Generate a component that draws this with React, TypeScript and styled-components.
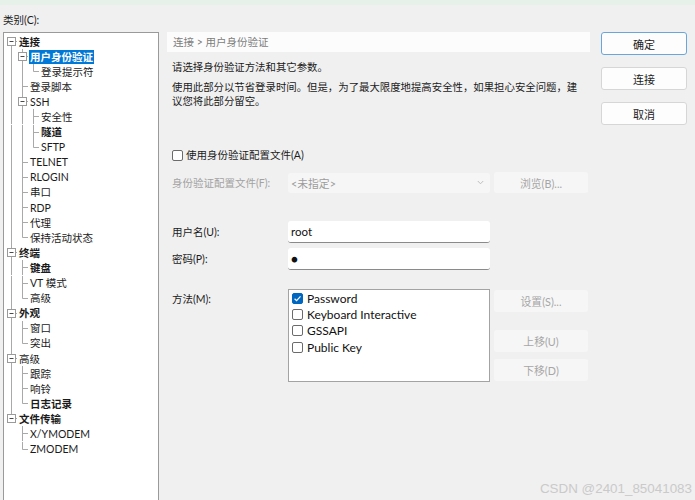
import React from 'react';
import styled, { createGlobalStyle } from 'styled-components';

const GlobalStyle = createGlobalStyle`
  html, body { margin: 0; padding: 0; background: #f0f0f0; }
  body { font-family: "Lato", "Noto Sans CJK SC", sans-serif; }
`;

const Window = styled.div`
  position: relative;
  width: 695px;
  height: 500px;
  overflow: hidden;
  background: #f0f0f0;
  color: #1b1b1b;
  font-family: "Lato", "Noto Sans CJK SC", sans-serif;
  font-size: 10.5px;
  display: flex;
  flex-direction: column;
`;

const TopStrip = styled.div`
  height: 5px;
  flex: none;
  background: #e5f1e9;
`;

const Body = styled.div`
  flex: 1;
  min-height: 0;
  display: flex;
  align-items: flex-start;
  padding-left: 3px;
`;

const LeftCol = styled.div`
  width: 156px;
  flex: none;
  display: flex;
  flex-direction: column;
`;

const CategoryLabel = styled.div`
  height: 27px;
  box-sizing: border-box;
  padding-top: 8px;
  line-height: 14px;
`;

const TreePanel = styled.div`
  height: 480px;
  box-sizing: border-box;
  background: #fff;
  border: 1px solid #9a9a9a;
  padding: 1px 0 0 2px;
`;

const TreeRow = styled.div`
  display: flex;
  align-items: center;
  height: 15.1px;
`;

const Cell = styled.svg`
  width: 11px;
  height: 100%;
  flex: none;
  overflow: visible;
`;

const NodeLabel = styled.span<{ $bold?: boolean; $selected?: boolean }>`
  margin-left: 1px;
  padding: 0 1px;
  height: 14px;
  line-height: 14px;
  white-space: nowrap;
  font-weight: ${(p) => (p.$bold ? 700 : 400)};
  background: ${(p) => (p.$selected ? '#0078d7' : 'transparent')};
  color: ${(p) => (p.$selected ? '#fff' : '#1b1b1b')};
`;

const MidCol = styled.div`
  width: 423px;
  flex: none;
  margin-left: 8px;
  margin-top: 27px;
  display: flex;
  flex-direction: column;
`;

const Breadcrumb = styled.div`
  height: 20px;
  line-height: 20px;
  background: #fcfcfc;
  color: #7c7c7c;
  padding-left: 6px;
`;

const Content = styled.div`
  padding-left: 5px;
  display: flex;
  flex-direction: column;
`;

const Para = styled.div<{ $mt: number }>`
  margin-top: ${(p) => p.$mt}px;
  line-height: 14px;
  font-size: 10.4px;
  white-space: nowrap;
`;

const CheckRow = styled.label`
  margin-top: 40px;
  height: 14px;
  display: flex;
  align-items: center;
  gap: 3px;
  line-height: 14px;
`;

const Box = styled.span<{ $checked?: boolean }>`
  width: 11px;
  height: 11px;
  flex: none;
  border-radius: 2px;
  box-sizing: border-box;
  border: 1px solid ${(p) => (p.$checked ? '#0067c0' : '#6b6b6b')};
  background: ${(p) => (p.$checked ? '#0067c0' : '#fff')};
  display: flex;
  align-items: center;
  justify-content: center;
`;

const FormRow = styled.div<{ $mt: number; $top?: boolean }>`
  margin-top: ${(p) => p.$mt}px;
  display: grid;
  grid-template-columns: 112px 202px 94px;
  column-gap: 4px;
  align-items: ${(p) => (p.$top ? 'start' : 'center')};
`;

const FieldLabel = styled.div<{ $disabled?: boolean; $pt?: number }>`
  line-height: 14px;
  white-space: nowrap;
  padding-top: ${(p) => p.$pt ?? 0}px;
  color: ${(p) => (p.$disabled ? '#a2a2a2' : '#1b1b1b')};
`;

const SelectBox = styled.div`
  height: 20px;
  box-sizing: border-box;
  background: #f6f6f6;
  border-radius: 3px;
  color: #9c9c9c;
  display: flex;
  align-items: center;
  justify-content: space-between;
  padding: 0 6px 0 3px;
  font-size: 10.8px;
`;

const TextInput = styled.div`
  height: 22px;
  box-sizing: border-box;
  background: #fff;
  border-radius: 3px;
  border-bottom: 1px solid #8a8a8a;
  padding-left: 3px;
  display: flex;
  align-items: center;
  font-size: 11.5px;
  color: #111;
`;

const GhostButton = styled.div<{ $h: number; $mt?: number }>`
  height: ${(p) => p.$h}px;
  margin-top: ${(p) => p.$mt ?? 0}px;
  box-sizing: border-box;
  background: #f6f6f6;
  border-radius: 3px;
  color: #a6a6a6;
  display: flex;
  align-items: center;
  justify-content: center;
  font-size: 10.8px;
`;

const ListBox = styled.div`
  height: 93px;
  box-sizing: border-box;
  background: #fff;
  border: 1px solid #a3a3a3;
  padding: 0 3px;
  display: flex;
  flex-direction: column;
`;

const ListItem = styled.div`
  height: 16.4px;
  display: flex;
  align-items: center;
  gap: 4px;
  font-size: 12px;
  color: #111;
`;

const ButtonStack = styled.div`
  display: flex;
  flex-direction: column;
`;

const RightCol = styled.div`
  width: 86px;
  flex: none;
  margin-left: 11px;
  margin-top: 27px;
  display: flex;
  flex-direction: column;
  gap: 12px;
`;

const DialogButton = styled.div<{ $default?: boolean }>`
  height: 23px;
  box-sizing: border-box;
  background: #fdfdfd;
  border: 1px solid ${(p) => (p.$default ? '#6aa6d9' : '#d6d6d6')};
  border-radius: 3px;
  display: flex;
  align-items: center;
  justify-content: center;
  font-size: 11px;
  color: #1b1b1b;
`;

const Watermark = styled.div`
  position: absolute;
  right: 3px;
  bottom: 4px;
  font-family: "Liberation Sans", sans-serif;
  font-size: 13.4px;
  color: #cacaca;
`;

type Node = { label: string; bold?: boolean; selected?: boolean; children?: Node[] };

const tree: Node[] = [
  {
    label: '连接',
    bold: true,
    children: [
      { label: '用户身份验证', bold: true, selected: true, children: [{ label: '登录提示符' }] },
      { label: '登录脚本' },
      { label: 'SSH', children: [{ label: '安全性' }, { label: '隧道', bold: true }, { label: 'SFTP' }] },
      { label: 'TELNET' },
      { label: 'RLOGIN' },
      { label: '串口' },
      { label: 'RDP' },
      { label: '代理' },
      { label: '保持活动状态' },
    ],
  },
  { label: '终端', bold: true, children: [{ label: '键盘', bold: true }, { label: 'VT 模式' }, { label: '高级' }] },
  { label: '外观', bold: true, children: [{ label: '窗口' }, { label: '突出' }] },
  { label: '高级', children: [{ label: '跟踪' }, { label: '响铃' }, { label: '日志记录', bold: true }] },
  { label: '文件传输', bold: true, children: [{ label: 'X/YMODEM' }, { label: 'ZMODEM' }] },
];

type Flat = { node: Node; guides: boolean[]; last: boolean; first: boolean };

function flatten(nodes: Node[], guides: boolean[], out: Flat[], root: boolean) {
  nodes.forEach((n, i) => {
    const last = i === nodes.length - 1;
    out.push({ node: n, guides, last, first: root && i === 0 });
    if (n.children) flatten(n.children, [...guides, !last], out, false);
  });
  return out;
}

const LINE = '#a9a9a9';

const Guide = ({ on }: { on: boolean }) => (
  <Cell>{on && <line x1="5.5" x2="5.5" y1="0" y2="100%" stroke={LINE} strokeWidth="1" />}</Cell>
);

const Connector = ({ first, last, expandable }: { first: boolean; last: boolean; expandable: boolean }) => (
  <Cell>
    <line x1="5.5" x2="5.5" y1={first ? '50%' : '0'} y2={last ? '50%' : '100%'} stroke={LINE} strokeWidth="1" />
    <line x1="5.5" x2="11" y1="7.5" y2="7.5" stroke={LINE} strokeWidth="1" />
    {expandable && (
      <>
        <rect x="1.5" y="3.5" width="8" height="8" fill="#fff" stroke="#9a9a9a" strokeWidth="1" />
        <line x1="3.5" x2="7.5" y1="7.5" y2="7.5" stroke="#4a4a4a" strokeWidth="1" />
      </>
    )}
  </Cell>
);

const Check = () => (
  <svg width="9" height="9" viewBox="0 0 9 9">
    <path d="M1.6 4.7 L3.6 6.6 L7.5 2.4" fill="none" stroke="#fff" strokeWidth="1.2" />
  </svg>
);

const methods = [
  { label: 'Password', checked: true },
  { label: 'Keyboard Interactive' },
  { label: 'GSSAPI' },
  { label: 'Public Key' },
];

export default function App() {
  const rows = flatten(tree, [], [], true);
  return (
    <>
      <GlobalStyle />
      <Window>
        <TopStrip />
        <Body>
          <LeftCol>
            <CategoryLabel>类别(C):</CategoryLabel>
            <TreePanel>
              {rows.map((r, i) => (
                <TreeRow key={i}>
                  {r.guides.map((g, j) => (
                    <Guide key={j} on={g} />
                  ))}
                  <Connector first={r.first} last={r.last} expandable={!!r.node.children} />
                  <NodeLabel $bold={r.node.bold} $selected={r.node.selected}>
                    {r.node.label}
                  </NodeLabel>
                </TreeRow>
              ))}
            </TreePanel>
          </LeftCol>

          <MidCol>
            <Breadcrumb>连接 &gt; 用户身份验证</Breadcrumb>
            <Content>
              <Para $mt={8}>请选择身份验证方法和其它参数。</Para>
              <Para $mt={6}>
                使用此部分以节省登录时间。但是，为了最大限度地提高安全性，如果担心安全问题，建
                <br />
                议您将此部分留空。
              </Para>
              <CheckRow>
                <Box />
                使用身份验证配置文件(A)
              </CheckRow>
              <FormRow $mt={10}>
                <FieldLabel $disabled>身份验证配置文件(F):</FieldLabel>
                <SelectBox>
                  <span>&lt;未指定&gt;</span>
                  <svg width="7" height="5" viewBox="0 0 7 5">
                    <path d="M0.8 1 L3.5 3.8 L6.2 1" fill="none" stroke="#b8b8b8" strokeWidth="0.9" />
                  </svg>
                </SelectBox>
                <GhostButton $h={21}>浏览(B)...</GhostButton>
              </FormRow>
              <FormRow $mt={28}>
                <FieldLabel>用户名(U):</FieldLabel>
                <TextInput>root</TextInput>
              </FormRow>
              <FormRow $mt={5}>
                <FieldLabel>密码(P):</FieldLabel>
                <TextInput>●</TextInput>
              </FormRow>
              <FormRow $mt={19} $top>
                <FieldLabel $pt={3}>方法(M):</FieldLabel>
                <ListBox>
                  {methods.map((m) => (
                    <ListItem key={m.label}>
                      <Box $checked={m.checked}>{m.checked && <Check />}</Box>
                      {m.label}
                    </ListItem>
                  ))}
                </ListBox>
                <ButtonStack>
                  <GhostButton $h={22} $mt={1}>设置(S)...</GhostButton>
                  <GhostButton $h={22} $mt={18}>上移(U)</GhostButton>
                  <GhostButton $h={22} $mt={7}>下移(D)</GhostButton>
                </ButtonStack>
              </FormRow>
            </Content>
          </MidCol>

          <RightCol>
            <DialogButton $default>确定</DialogButton>
            <DialogButton>连接</DialogButton>
            <DialogButton>取消</DialogButton>
          </RightCol>
        </Body>
        <Watermark>CSDN @2401_85041083</Watermark>
      </Window>
    </>
  );
}
